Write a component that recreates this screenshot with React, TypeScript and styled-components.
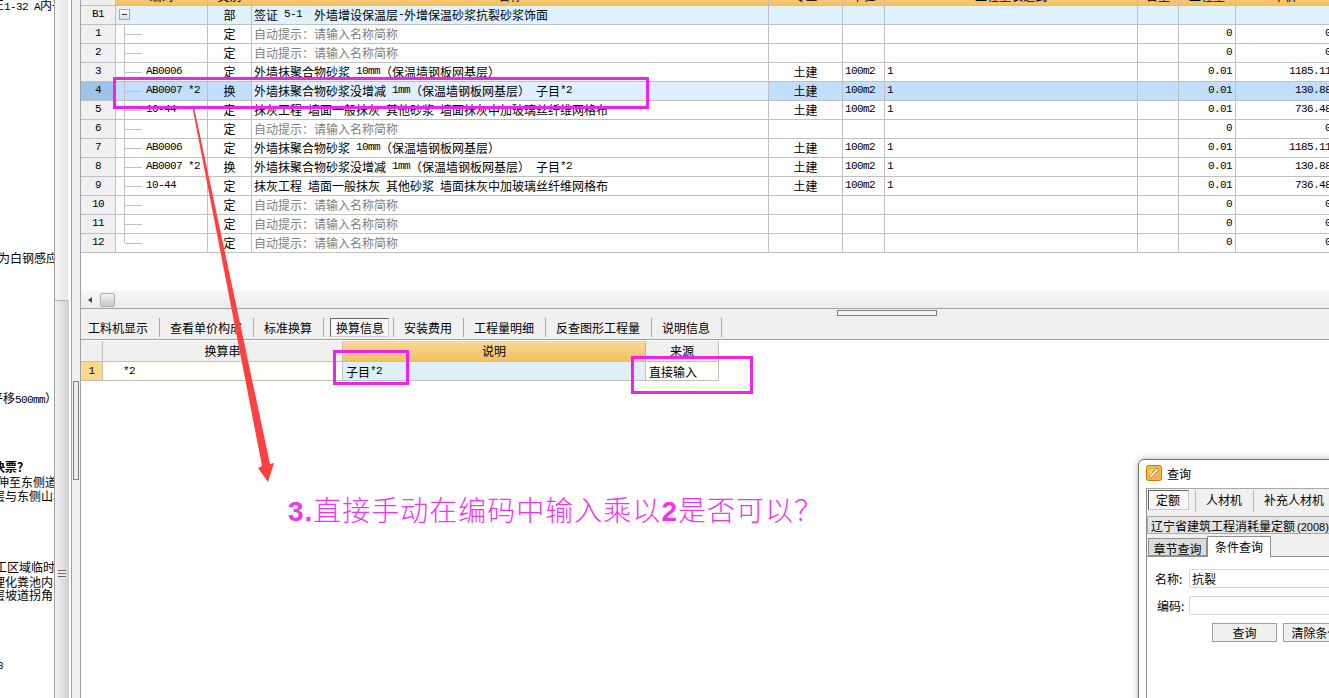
import { Fragment } from "react"
import styled, { createGlobalStyle } from "styled-components"

const GlobalStyle = createGlobalStyle`
html, body {
    margin: 0;
    padding: 0;
    background: #fff;
    overflow: hidden;
}
`

interface IRow {
    no: string
    code?: string
    kind: string
    name: string
    hint?: boolean
    unit?: boolean
    qty?: string
    price?: string
    selected?: boolean
}

const hintText = "自动提示：请输入名称简称"
const plaster = "外墙抹聚合物砂浆 10mm（保温墙钢板网基层）"
const plasterX2 = "外墙抹聚合物砂浆没增减 1mm（保温墙钢板网基层） 子目*2"
const mesh = "抹灰工程 墙面一般抹灰 其他砂浆 墙面抹灰中加玻璃丝纤维网格布"

const rows: IRow[] = [
    { no: "1", kind: "定", name: hintText, hint: true, qty: "0", price: "0" },
    { no: "2", kind: "定", name: hintText, hint: true, qty: "0", price: "0" },
    { no: "3", code: "AB0006", kind: "定", name: plaster, unit: true, qty: "0.01", price: "1185.11" },
    { no: "4", code: "AB0007 *2", kind: "换", name: plasterX2, unit: true, qty: "0.01", price: "130.88", selected: true },
    { no: "5", code: "10-44", kind: "定", name: mesh, unit: true, qty: "0.01", price: "736.48" },
    { no: "6", kind: "定", name: hintText, hint: true, qty: "0", price: "0" },
    { no: "7", code: "AB0006", kind: "定", name: plaster, unit: true, qty: "0.01", price: "1185.11" },
    { no: "8", code: "AB0007 *2", kind: "换", name: plasterX2, unit: true, qty: "0.01", price: "130.88" },
    { no: "9", code: "10-44", kind: "定", name: mesh, unit: true, qty: "0.01", price: "736.48" },
    { no: "10", kind: "定", name: hintText, hint: true, qty: "0", price: "0" },
    { no: "11", kind: "定", name: hintText, hint: true, qty: "0", price: "0" },
    { no: "12", kind: "定", name: hintText, hint: true, qty: "0", price: "0" },
]

const docLines = [
    { text: "王1-32 A内子", x: -8, top: -2 },
    { text: "为白钢感应", x: -2, top: 239 },
    { text: "平移500mm）", x: -9, top: 126 },
    { text: "决票？", x: -7, top: 55, bold: true },
    { text: "伸至东侧道", x: -3, top: 1 },
    { text: "层与东侧山墙", x: -7, top: 0 },
    { text: "工区域临时", x: -5, top: 57 },
    { text: "理化粪池内：", x: -7, top: 1 },
    { text: "层坡道拐角：", x: -7, top: -1 },
    { text: "8", x: -3, top: 55 },
]

const headers = ["", "编码", "类别", "名称", "专业", "单位", "工程量表达式", "含量", "工程量", "单价"]
const tabs = ["工料机显示", "查看单价构成", "标准换算", "换算信息", "安装费用", "工程量明细", "反查图形工程量", "说明信息"]

// latin runs are squeezed mono so they come out 6px wide like the bitmap font
function Txt({ children }: { children: string }) {
    const parts = children.split(/([\x20-\x7e]+)/)
    return (
        <>
            {parts.map((p, i) => (i % 2 === 1 ? <Latin key={i}>{p}</Latin> : <Fragment key={i}>{p}</Fragment>))}
        </>
    )
}

export default function App() {
    return (
        <>
            <GlobalStyle />
            <Page>
                <DocColumn>
                    {docLines.map((l) => (
                        <DocLine key={l.text} $x={l.x} $top={l.top} $bold={l.bold}>
                            <Txt>{l.text}</Txt>
                        </DocLine>
                    ))}
                </DocColumn>
                <PageScroll>
                    <PageThumb>
                        <Grip />
                    </PageThumb>
                </PageScroll>
                <Splitter>
                    <SplitHandle />
                </Splitter>
                <Main>
                    <TopPanel>
                        <GridClip>
                            <HeaderRow>
                                {headers.map((h, i) => (
                                    <HeaderCell key={i} $orange={i > 0}>{h}</HeaderCell>
                                ))}
                            </HeaderRow>
                            <Row>
                                <NoCell><Txt>B1</Txt></NoCell>
                                <CodeCell $bg="#e0f2fe">
                                    <Collapse />
                                </CodeCell>
                                <Cell $center $bg="#e0f2fe">部</Cell>
                                <Cell $bg="#e0f2fe"><Txt>{"签证 5-1  外墙增设保温层-外增保温砂浆抗裂砂浆饰面"}</Txt></Cell>
                                <Cell $bg="#e0f2fe" />
                                <Cell $bg="#e0f2fe" />
                                <Cell $bg="#e0f2fe" />
                                <Cell $bg="#e0f2fe" />
                                <Cell $bg="#e0f2fe" />
                                <Cell $bg="#e0f2fe" />
                            </Row>
                            {rows.map((r, i) => {
                                const bg = r.selected ? "#c1dffc" : "#fff"
                                return (
                                    <Row key={r.no}>
                                        <NoCell $selected={r.selected}><Txt>{r.no}</Txt></NoCell>
                                        <CodeCell $bg={bg}>
                                            <TreeBranch $last={i === rows.length - 1} />
                                            {r.code && <Txt>{r.code}</Txt>}
                                        </CodeCell>
                                        <Cell $center $bg={bg}>{r.kind}</Cell>
                                        <NameCell $hint={r.hint} $selected={r.selected}><Txt>{r.name}</Txt></NameCell>
                                        <Cell $center $bg={bg}>{r.unit && "土建"}</Cell>
                                        <Cell $bg={bg}>{r.unit && <Txt>100m2</Txt>}</Cell>
                                        <Cell $bg={bg}>{r.unit && <Txt>1</Txt>}</Cell>
                                        <Cell $bg={bg} />
                                        <NumCell $bg={bg}><Txt>{r.qty ?? ""}</Txt></NumCell>
                                        <NumCell $bg={bg}><Txt>{r.price ?? ""}</Txt></NumCell>
                                    </Row>
                                )
                            })}
                        </GridClip>
                        <HScroll>
                            <ArrowLeft />
                            <HThumb />
                        </HScroll>
                    </TopPanel>
                    <TabBar>
                        <SplitGrip />
                        {tabs.map((t, i) => (
                            <Tab key={t} $first={i === 0} $active={t === "换算信息"}>{t}</Tab>
                        ))}
                    </TabBar>
                    <LowerGrid>
                        <LowerHead />
                        <LowerHead>换算串</LowerHead>
                        <LowerHead $orange>说明</LowerHead>
                        <LowerHead>来源</LowerHead>
                        <LowerNo><Txt>1</Txt></LowerNo>
                        <LowerCell $bg="#fffef7" $pad={20}><Txt>*2</Txt></LowerCell>
                        <LowerCell $bg="#deeff7" $pad={3}>子目<Txt>*2</Txt></LowerCell>
                        <LowerCell $bg="#fffef7" $pad={3}>直接输入</LowerCell>
                    </LowerGrid>
                </Main>

                <Dialog>
                    <TitleBar>
                        <svg width="16" height="16" viewBox="0 0 16 16">
                            <rect x="0.5" y="0.5" width="15" height="15" rx="2" fill="#f2b544" stroke="#c97a16" />
                            <path d="M3 11 L11 3 L13 5 L5 13 Z" fill="#fff4d8" stroke="#b5651d" strokeWidth="0.7" />
                            <path d="M3 7 L7 4 M3 9 L6 7" stroke="#fff" strokeWidth="1" />
                        </svg>
                        查询
                    </TitleBar>
                    <DialogBody>
                        <MainTabs>
                            <MainTab $active>定额</MainTab>
                            <MainTab>人材机</MainTab>
                            <MainTab>补充人材机</MainTab>
                        </MainTabs>
                        <BookBar>
                            辽宁省建筑工程消耗量定额<Small>(2008)</Small>
                        </BookBar>
                        <SubTabs>
                            <SubTab>章节查询</SubTab>
                            <SubTab $active>条件查询</SubTab>
                        </SubTabs>
                        <Form>
                            <FormRow>
                                <FormLabel>名称:</FormLabel>
                                <Input>抗裂</Input>
                            </FormRow>
                            <FormRow>
                                <FormLabel $shift>编码:</FormLabel>
                                <Input />
                            </FormRow>
                            <ButtonRow>
                                <DlgButton>查询</DlgButton>
                                <DlgButton>清除条件</DlgButton>
                            </ButtonRow>
                        </Form>
                    </DialogBody>
                </Dialog>

                <Overlay viewBox="0 0 1329 698">
                    <polygon points="192.5,108 194.2,108 270,464 274,463 268,482 258,468 262,466" fill="#ff4040" />
                </Overlay>
                <MarkBox $x={113} $y={77} $w={536} $h={32} />
                <MarkBox $x={333} $y={350} $w={76} $h={35} />
                <MarkBox $x={631} $y={356} $w={122} $h={38} />
                <Question>
                    <b>3.</b>直接手动在编码中输入乘以<b>2</b>是否可以？
                </Question>
            </Page>
        </>
    )
}

const lineColor = "#c0c0c0"
const frameColor = "#a0a0a0"
const columns = "35px 92px 44px 517px 74px 42px 253px 41px 57px 99px"

const Page = styled.div`
position: relative;
display: flex;
width: 1329px;
height: 698px;
overflow: hidden;
font-family: "Noto Sans CJK SC", "Liberation Sans", sans-serif;
font-size: 12px;
color: #000;
`
const Latin = styled.span`
font-family: "Liberation Mono", monospace;
font-size: 11px;
letter-spacing: -0.6px;
white-space: pre;
`
const DocColumn = styled.div`
width: 54px;
flex-shrink: 0;
overflow: hidden;
`
const DocLine = styled.div<{ $x: number; $top: number; $bold?: boolean }>`
height: 14px;
line-height: 14px;
margin-left: ${(p) => p.$x}px;
margin-top: ${(p) => p.$top}px;
font-weight: ${(p) => (p.$bold ? 700 : 400)};
white-space: nowrap;
`
const PageScroll = styled.div`
width: 17px;
flex-shrink: 0;
box-sizing: border-box;
border-left: 1px solid ${frameColor};
background: linear-gradient(to right, #f6f6f6, #e6e6e6 80%, #fff 80%);
padding-top: 300px;
`
const PageThumb = styled.div`
width: 14px;
height: 398px;
background: linear-gradient(to right, #f2f2f2, #cfcfcf);
border-top: 1px solid #b8b8b8;
display: flex;
justify-content: center;
padding-top: 269px;
box-sizing: border-box;
`
const Grip = styled.div`
width: 8px;
height: 8px;
background: repeating-linear-gradient(to bottom, #666 0 1px, #eee 1px 3px);
`
const Splitter = styled.div`
width: 10px;
flex-shrink: 0;
box-sizing: border-box;
border-left: 1px solid ${frameColor};
border-right: 1px solid ${frameColor};
background: #f0f0f0;
padding: 381px 0 0 1px;
`
const SplitHandle = styled.div`
width: 6px;
height: 99px;
box-sizing: border-box;
border: 1px solid #808080;
background: #eee;
`
const Main = styled.div`
flex: 1;
min-width: 0;
display: flex;
flex-direction: column;
`
const TopPanel = styled.div`
height: 308px;
flex-shrink: 0;
display: flex;
flex-direction: column;
justify-content: space-between;
border-bottom: 1px solid ${frameColor};
overflow: hidden;
`
const GridClip = styled.div`
width: 1254px;
`
const HeaderRow = styled.div`
display: grid;
grid-template-columns: ${columns};
height: 20px;
margin-top: -14px;
border-bottom: 1px solid ${lineColor};
box-sizing: border-box;
`
const HeaderCell = styled.div<{ $orange: boolean }>`
display: flex;
align-items: center;
justify-content: center;
border-right: 1px solid ${lineColor};
background: ${(p) => (p.$orange ? "linear-gradient(#fad89a, #f2c164)" : "#efefef")};
`
const Row = styled.div`
display: grid;
grid-template-columns: ${columns};
height: 19px;
`
const Cell = styled.div<{ $bg?: string; $center?: boolean }>`
display: flex;
align-items: center;
justify-content: ${(p) => (p.$center ? "center" : "flex-start")};
padding-left: ${(p) => (p.$center ? 0 : 2)}px;
padding-bottom: 2px;
background: ${(p) => p.$bg ?? "#fff"};
border-right: 1px solid ${lineColor};
border-bottom: 1px solid ${lineColor};
white-space: nowrap;
overflow: hidden;
box-sizing: border-box;
`
const NoCell = styled(Cell)<{ $selected?: boolean }>`
justify-content: center;
padding-left: 0;
background: ${(p) => (p.$selected ? "#9dc3e6" : "#f0f0f0")};
`
const CodeCell = styled(Cell)`
position: relative;
padding-left: 30px;
`
const NameCell = styled(Cell)<{ $hint?: boolean; $selected?: boolean }>`
color: ${(p) => (p.$hint ? "#808080" : "#000")};
background: ${(p) => (p.$selected ? "#e0efff" : "#fff")};
`
const NumCell = styled(Cell)`
justify-content: flex-end;
padding-right: 3px;
padding-left: 0;
`
const TreeBranch = styled.span<{ $last: boolean }>`
position: absolute;
left: 8px;
top: 0;
width: 17px;
height: ${(p) => (p.$last ? "9px" : "19px")};
border-left: 1px solid ${lineColor};
&::after {
    content: "";
    position: absolute;
    left: 0;
    top: 9px;
    width: 17px;
    height: 1px;
    background: ${lineColor};
}
`
const Collapse = styled.span`
position: absolute;
left: 3px;
top: 3px;
width: 11px;
height: 11px;
box-sizing: border-box;
border: 1px solid #a8a8a8;
background: linear-gradient(#fff, #ddd);
&::after {
    content: "";
    position: absolute;
    left: 2px;
    top: 4px;
    width: 5px;
    height: 1px;
    background: #333;
}
`
const HScroll = styled.div`
height: 17px;
display: flex;
align-items: center;
background: linear-gradient(#f6f6f6, #ececec);
padding-left: 7px;
`
const ArrowLeft = styled.span`
width: 0;
height: 0;
border-top: 3px solid transparent;
border-bottom: 3px solid transparent;
border-right: 4px solid #444;
margin-right: 8px;
`
const HThumb = styled.span`
width: 15px;
height: 14px;
border: 1px solid #b0b0b0;
border-radius: 2px;
box-sizing: border-box;
background: linear-gradient(#f4f4f4, #c8c8c8);
`
const TabBar = styled.div`
position: relative;
height: 31px;
flex-shrink: 0;
display: flex;
align-items: center;
box-sizing: border-box;
padding-top: 6px;
background: #f0f0f0;
border-bottom: 1px solid ${frameColor};
`
const SplitGrip = styled.span`
position: absolute;
left: 756px;
top: 1px;
width: 100px;
height: 6px;
box-sizing: border-box;
border: 1px solid #808080;
background: #f4f4f4;
`
const Tab = styled.div<{ $first?: boolean; $active?: boolean }>`
position: relative;
z-index: 0;
height: 19px;
line-height: 19px;
box-sizing: content-box;
padding: 0 ${(p) => (p.$active ? 9 : 11)}px 0 ${(p) => (p.$first ? 7 : p.$active ? 12 : 10)}px;
border-right: 1px solid #a8a8a8;
white-space: nowrap;
${(p) =>
    p.$active &&
    `&::before {
        content: "";
        position: absolute;
        left: 6px;
        right: 4px;
        top: 0;
        bottom: 0;
        box-sizing: border-box;
        border: 1px solid #d0d0d0;
        border-top-color: #666;
        border-left-color: #666;
        background: #f6f6f6;
        z-index: -1;
    }`}
`
const LowerGrid = styled.div`
display: grid;
grid-template-columns: 22px 240px 303px 73px;
grid-template-rows: 21px 19px;
width: 638px;
margin-top: 1px;
`
const LowerHead = styled.div<{ $orange?: boolean }>`
display: flex;
align-items: center;
justify-content: center;
box-sizing: border-box;
padding-bottom: 2px;
background: ${(p) => (p.$orange ? "linear-gradient(#fad89a, #f2c164)" : "#efefef")};
border-bottom: 1px solid ${lineColor};
border-right: 1px solid ${(p) => (p.$orange ? "#d8b068" : lineColor)};
`
const LowerNo = styled.div`
display: flex;
align-items: center;
justify-content: center;
box-sizing: border-box;
background: #fdd78c;
border-bottom: 1px solid ${lineColor};
border-right: 1px solid ${lineColor};
`
const LowerCell = styled.div<{ $bg: string; $pad: number }>`
display: flex;
align-items: center;
box-sizing: border-box;
padding-left: ${(p) => p.$pad}px;
background: ${(p) => p.$bg};
border-bottom: 1px solid ${lineColor};
border-right: 1px solid ${lineColor};
`
const Dialog = styled.div`
position: absolute;
left: 1138px;
top: 459px;
width: 260px;
height: 260px;
box-sizing: border-box;
background: #fff;
border: 1px solid #707070;
border-top-left-radius: 6px;
box-shadow: 0 0 7px rgba(0, 0, 0, 0.3);
display: flex;
flex-direction: column;
`
const TitleBar = styled.div`
height: 28px;
flex-shrink: 0;
box-sizing: border-box;
display: flex;
align-items: center;
gap: 5px;
padding: 0 0 2px 7px;
`
const DialogBody = styled.div`
flex: 1;
margin-left: 7px;
border-left: 1px solid #8a8a8a;
border-top: 1px solid #a8a8a8;
background: #f0f0f0;
display: flex;
flex-direction: column;
`
const MainTabs = styled.div`
height: 27px;
flex-shrink: 0;
box-sizing: border-box;
display: flex;
align-items: flex-start;
padding: 1px 0 0 1px;
`
const MainTab = styled.div<{ $active?: boolean }>`
height: 22px;
line-height: 20px;
box-sizing: border-box;
white-space: nowrap;
padding: 0 11px 0 10px;
border-left: 1px solid #b8b8b8;
${(p) =>
    p.$active &&
    `width: 41px;
    height: 20px;
    line-height: 18px;
    margin-right: 6px;
    padding: 0 0 0 7px;
    border: 1px solid #c8c8c8;
    border-top-color: #666;
    border-left-color: #666;
    background: #f8f8f8;`}
`
const BookBar = styled.div`
height: 18px;
line-height: 17px;
flex-shrink: 0;
box-sizing: border-box;
padding-left: 3px;
white-space: nowrap;
background: #e4e4e4;
border: 1px solid #a8a8a8;
border-radius: 2px;
`
const Small = styled.span`
font-family: "Liberation Sans", sans-serif;
font-size: 11px;
margin-left: 2px;
`
const SubTabs = styled.div`
height: 23px;
flex-shrink: 0;
display: flex;
align-items: flex-end;
padding-left: 1px;
box-sizing: border-box;
border-bottom: 1px solid #909090;
`
const SubTab = styled.div<{ $active?: boolean }>`
box-sizing: border-box;
white-space: nowrap;
text-align: center;
width: ${(p) => (p.$active ? 64 : 59)}px;
height: ${(p) => (p.$active ? 21 : 18)}px;
line-height: 20px;
margin-bottom: ${(p) => (p.$active ? -1 : 0)}px;
background: ${(p) => (p.$active ? "#fff" : "#dcdcdc")};
border: 1px solid #909090;
border-bottom: ${(p) => (p.$active ? "none" : "1px solid #909090")};
`
const Form = styled.div`
flex: 1;
background: #fff;
padding: 12px 0 0 8px;
display: flex;
flex-direction: column;
`
const FormRow = styled.div`
display: flex;
align-items: center;
height: 19px;
margin-bottom: 8px;
`
const FormLabel = styled.label<{ $shift?: boolean }>`
width: 34px;
flex-shrink: 0;
white-space: nowrap;
padding-left: ${(p) => (p.$shift ? 2 : 0)}px;
box-sizing: border-box;
`
const Input = styled.div`
width: 180px;
height: 19px;
line-height: 17px;
box-sizing: border-box;
padding-left: 2px;
border: 1px solid #d4d8e2;
border-radius: 2px;
`
const ButtonRow = styled.div`
display: flex;
gap: 6px;
padding-left: 57px;
`
const DlgButton = styled.button`
width: 65px;
height: 19px;
padding: 0;
font: inherit;
color: #000;
white-space: nowrap;
background: #f0f0f0;
border: 1px solid #a0a0a0;
`
const Overlay = styled.svg`
position: absolute;
left: 0;
top: 0;
width: 1329px;
height: 698px;
pointer-events: none;
`
const MarkBox = styled.div<{ $x: number; $y: number; $w: number; $h: number }>`
position: absolute;
left: ${(p) => p.$x}px;
top: ${(p) => p.$y}px;
width: ${(p) => p.$w}px;
height: ${(p) => p.$h}px;
box-sizing: border-box;
border: 3px solid #f020f0;
`
const Question = styled.div`
position: absolute;
left: 288px;
top: 489px;
font-size: 28px;
line-height: 40px;
letter-spacing: 1px;
font-weight: 300;
color: #f530f5;
white-space: nowrap;
b {
    font-family: "Liberation Sans", sans-serif;
    font-weight: 700;
}
`
